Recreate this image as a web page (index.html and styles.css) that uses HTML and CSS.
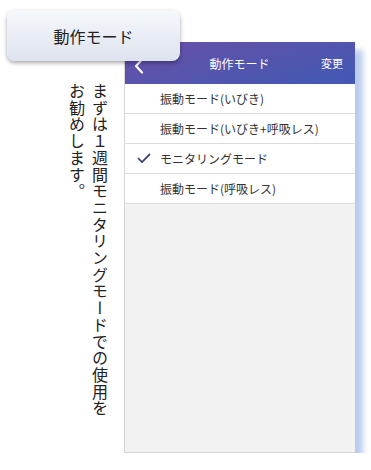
FILE: index.html
```html
<!DOCTYPE html>
<html lang="ja">
  <head>
    <meta charset="UTF-8" />
    <meta name="viewport" content="width=device-width, initial-scale=1.0" />
    <title>動作モード</title>
    <link rel="stylesheet" href="styles.css">
  </head>
  <body>
    <div class="label">動作モード</div>
    <div class="page">
      <p class="note">まずは１週間モニタリングモードでの使用をお勧めします。</p>
      <div class="phone">
        <div class="header">
          <svg class="back" width="10" height="16" viewBox="0 0 10 16">
            <path d="M8 1.5 L2 8 L8 14.5" fill="none" stroke="#fff" stroke-width="2.2" stroke-linecap="round" stroke-linejoin="round" />
          </svg>
          <span class="title">動作モード</span>
          <span class="action">変更</span>
        </div>
        <ul class="modes">
          <li>振動モード(いびき)</li>
          <li>振動モード(いびき+呼吸レス)</li>
          <li class="selected">
            <svg class="check" width="14" height="11" viewBox="0 0 14 11">
              <path d="M1.5 5.5 L5 9.2 L12.5 1.5" fill="none" stroke="#3d4678" stroke-width="1.8" stroke-linecap="round" stroke-linejoin="round" />
            </svg>
            モニタリングモード
          </li>
          <li>振動モード(呼吸レス)</li>
        </ul>
      </div>
    </div>
  </body>
</html>
```

FILE: styles.css
```css
body {
  margin: 0;
  background-color: white;
  font-family: "Noto Sans CJK JP", "Noto Sans", sans-serif;
  color: #222;
}
.label {
  position: absolute;
  left: 7px;
  top: 10px;
  width: 173px;
  height: 51px;
  border-radius: 8px;
  background: linear-gradient(#f6f8fc, #dde3ef);
  box-shadow: 0 2px 4px rgba(0, 0, 0, 0.35);
  display: flex;
  align-items: center;
  justify-content: center;
  font-size: 16px;
  color: #222;
  z-index: 2;
}
.page {
  display: flex;
  padding: 42px 0 0 65px;
}
.note {
  writing-mode: vertical-rl;
  margin: 41px 0 0;
  height: 340px;
  font-size: 16px;
  line-height: 23px;
  letter-spacing: 0.7px;
  color: #222;
}
.phone {
  margin-left: 13px;
  width: 231px;
  height: 411px;
  background-color: #f2f2f2;
  border-left: 1px solid #d6d6d6;
  border-bottom: 1px solid #d6d6d6;
  box-sizing: border-box;
  box-shadow: 8px 8px 6px rgba(140, 168, 225, 0.6);
}
.header {
  height: 42px;
  display: flex;
  align-items: center;
  padding: 0 12px 0 9px;
  background: linear-gradient(165deg, #6a50a6, #4059b4);
  color: white;
}
.back {
  margin-top: 6px;
}
.title {
  flex: 1;
  text-align: center;
  font-size: 12px;
  margin-left: 14px;
}
.action {
  font-size: 11px;
}
.modes {
  list-style: none;
  margin: 0;
  padding: 0;
}
.modes li {
  height: 29px;
  border-bottom: 1px solid #dcdcdc;
  background-color: white;
  display: flex;
  align-items: center;
  padding-left: 35px;
  font-size: 12px;
  color: #333;
}
.modes li.selected {
  padding-left: 12px;
}
.check {
  margin-right: 9px;
}
```
